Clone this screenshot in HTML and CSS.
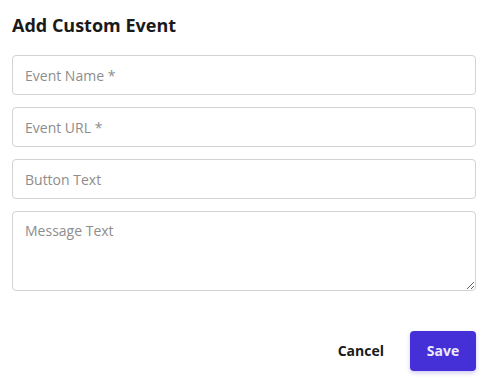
FILE: index.html
```html
<!DOCTYPE html>
<html>
<head>
    <title>Add Custom Event</title>
    <link rel="stylesheet" href="styles.css">
</head>
<body>

    <div class="dialog">
        <h2 class="title">Add Custom Event</h2>
        <form class="fields">
            <input type="text" class="field" placeholder="Event Name *" aria-label="Event Name">
            <input type="text" class="field" placeholder="Event URL *" aria-label="Event URL">
            <input type="text" class="field" placeholder="Button Text" aria-label="Button Text">
            <textarea class="field area" placeholder="Message Text" aria-label="Message Text"></textarea>
        </form>
        <div class="actions">
            <button class="btn cancel" type="button">Cancel</button>
            <button class="btn save" type="button">Save</button>
        </div>
    </div>

</body>
</html>
```

FILE: styles.css
```css
body {
    margin: 0;
    font-family: "Open Sans", sans-serif;
    background: #fff;
    color: #1a1a1a;
}
.dialog {
    padding: 12px 12px;
}
.title {
    margin: 0;
    font-size: 18px;
    font-weight: 700;
    line-height: 27px;
    color: #1a1a1a;
}
.fields {
    display: flex;
    flex-direction: column;
    gap: 12px;
    margin-top: 16px;
}
.field {
    box-sizing: border-box;
    width: 100%;
    height: 40px;
    padding: 0 12px;
    border: 1px solid #d3d3d3;
    border-radius: 4px;
    font-family: "Open Sans", sans-serif;
    font-size: 14px;
    color: #333;
    outline: none;
}
.field::placeholder {
    color: #8d8d8d;
}
.field.area {
    height: 80px;
    padding: 9px 12px;
    resize: vertical;
}
.actions {
    display: flex;
    justify-content: flex-end;
    align-items: center;
    gap: 14px;
    margin-top: 40px;
}
.btn {
    height: 40px;
    border: none;
    border-radius: 4px;
    font-family: "Open Sans", sans-serif;
    font-size: 14px;
    font-weight: 700;
    line-height: 38px;
    cursor: pointer;
}
.cancel {
    background: none;
    color: #1a1a1a;
    padding: 0 12px;
}
.save {
    background: #4430d6;
    color: #ece9ff;
    padding: 0 16px;
    min-width: 66px;
    box-shadow: 0 2px 4px rgba(68, 48, 214, 0.25);
}
```
